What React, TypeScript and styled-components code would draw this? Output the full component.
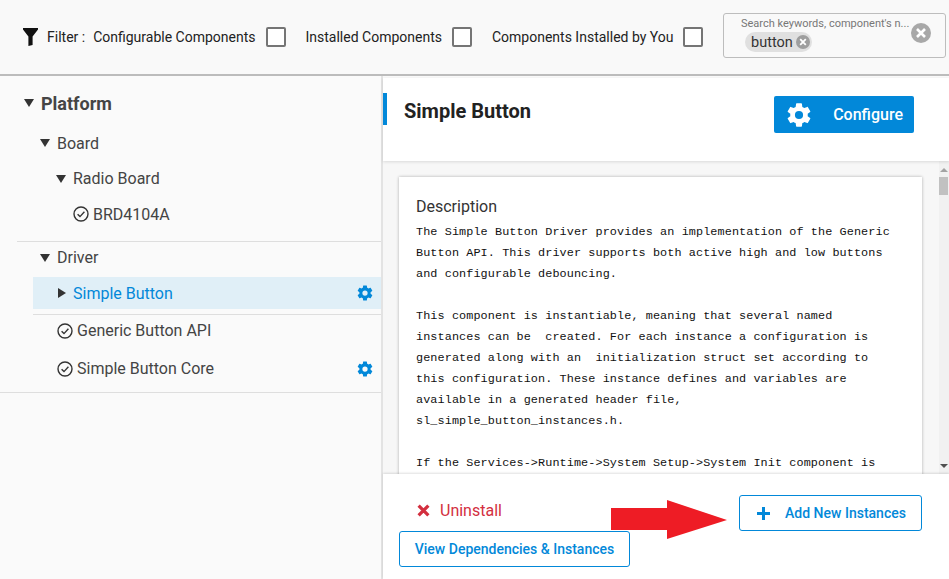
import React from "react";
import styled, { createGlobalStyle } from "styled-components";

const GlobalStyle = createGlobalStyle`
  html, body {
    margin: 0;
    padding: 0;
    background: #fafafa;
  }
  * { box-sizing: border-box; }
`;

const Page = styled.div`
  position: relative;
  width: 949px;
  height: 579px;
  overflow: hidden;
  display: flex;
  flex-direction: column;
  background: #fafafa;
  font-family: Roboto, "Liberation Sans", sans-serif;
  color: #333;
`;

const Toolbar = styled.div`
  height: 76px;
  flex: none;
  display: flex;
  align-items: center;
  padding: 0 3px 0 23px;
  border-bottom: 2px solid #bcbcbc;
  background: #f9f9f9;
  font-size: 14px;
  color: #222;
  white-space: nowrap;
`;

const FilterLabel = styled.span`
  margin-left: 9px;
  margin-right: 8px;
`;

const FilterOption = styled.label<{ gap: number }>`
  display: flex;
  align-items: center;
  flex: none;
  margin-right: ${(p) => p.gap}px;
`;

const CheckBox = styled.span`
  width: 20px;
  height: 20px;
  margin-left: 10px;
  border: 2px solid #757575;
  border-radius: 2px;
  background: #fff;
`;

const SearchBox = styled.div`
  position: relative;
  margin-left: auto;
  flex: none;
  width: 223px;
  height: 45px;
  margin-top: -3px;
  padding: 3px 0 0 17px;
  background: #f9f9f9;
  border: 1px solid #bdbdbd;
  border-radius: 3px;
`;

const SearchHint = styled.div`
  font-size: 11px;
  line-height: 14px;
  color: #777;
`;

const Chip = styled.span`
  display: inline-flex;
  align-items: center;
  height: 20px;
  margin: 1px 0 0 4px;
  padding: 0 2px 0 6px;
  gap: 3px;
  border-radius: 10px;
  background: #e0e0e0;
  font-size: 14.5px;
  color: #333;
`;

const ClearButton = styled.span`
  position: absolute;
  right: 14px;
  top: 9px;
  display: flex;
`;

const Body = styled.div`
  flex: 1;
  min-height: 0;
  display: flex;
`;

const Sidebar = styled.aside`
  width: 383px;
  flex: none;
  border-right: 2px solid #e3e3e3;
  padding-top: 9px;
`;

const TreeGroup = styled.div<{ inset?: number; underline?: boolean }>`
  margin-left: ${(p) => p.inset || 0}px;
  border-bottom: ${(p) => (p.underline ? "1px solid #dedede" : "none")};
`;

const Row = styled.div<{ height: number; indent: number; selected?: boolean }>`
  display: flex;
  align-items: center;
  height: ${(p) => p.height}px;
  padding-left: ${(p) => p.indent}px;
  padding-right: 7px;
  font-size: 16px;
  color: ${(p) => (p.selected ? "#0288d9" : "#444")};
  background: ${(p) => (p.selected ? "#e0eff7" : "transparent")};
`;

const PlatformRow = styled(Row)`
  margin-bottom: 4px;
  font-size: 18px;
  font-weight: 700;
  color: #454545;
`;

const Caret = styled.span<{ closed?: boolean }>`
  width: 0;
  height: 0;
  flex: none;
  margin-right: 7px;
  ${(p) =>
    p.closed
      ? `border-top: 5px solid transparent; border-bottom: 5px solid transparent; border-left: 8px solid #333;`
      : `border-left: 5px solid transparent; border-right: 5px solid transparent; border-top: 8px solid #333;`}
`;

const RowIcon = styled.span`
  display: flex;
  flex: none;
  margin-right: 4px;
`;

const RowGear = styled.span`
  display: flex;
  margin-left: auto;
`;

const Spacer = styled.div<{ size: number; line?: boolean }>`
  height: ${(p) => p.size}px;
  border-bottom: ${(p) => (p.line ? "1px solid #dedede" : "none")};
`;

const Detail = styled.main`
  flex: 1;
  min-width: 0;
  display: flex;
  flex-direction: column;
  margin-top: 2px;
  background: #fff;
`;

const Header = styled.header`
  height: 83px;
  flex: none;
  display: flex;
  align-items: flex-start;
  padding: 15px 35px 0 0;
  box-shadow: 0 1px 3px rgba(0, 0, 0, 0.12);
  z-index: 1;
`;

const Title = styled.h1`
  margin: 0;
  padding: 2px 0 0 17px;
  height: 32px;
  line-height: 32px;
  border-left: 4px solid #0288d9;
  font-size: 20px;
  font-weight: 700;
  color: #222;
`;

const ConfigureButton = styled.button`
  margin-left: auto;
  margin-top: 3px;
  width: 140px;
  height: 37px;
  display: flex;
  align-items: center;
  padding: 0 11px 0 11px;
  justify-content: space-between;
  border: none;
  border-radius: 2px;
  background: #0288d9;
  color: #fff;
  font-family: inherit;
  font-size: 16px;
  font-weight: 500;
`;

const ScrollArea = styled.div`
  position: relative;
  flex: 1;
  min-height: 0;
  overflow: hidden;
  display: flex;
  padding: 16px 0 0 16px;
  background: #f7f7f7;
`;

const Card = styled.article`
  width: 523px;
  height: 400px;
  flex: none;
  padding: 20px 17px 0;
  background: #fff;
  box-shadow: 0 0 3px rgba(0, 0, 0, 0.3);
`;

const CardHeading = styled.h2`
  margin: 0 0 6px;
  font-size: 16px;
  font-weight: 400;
  line-height: 19px;
  color: #333;
`;

const Code = styled.pre`
  margin: 0;
  font-family: "Liberation Mono", "Courier New", monospace;
  font-size: 11.8px;
  letter-spacing: 0.1px;
  line-height: 21px;
  color: #111;
`;

const ScrollBar = styled.div`
  position: absolute;
  top: 0;
  bottom: 0;
  right: 0;
  width: 10px;
  padding-top: 16px;
  background: #f1f1f1;
`;

const ScrollThumb = styled.div`
  height: 18px;
  margin-right: 1px;
  background: #c1c1c1;
`;

const ScrollArrow = styled.span<{ down?: boolean }>`
  position: absolute;
  left: 1px;
  ${(p) => (p.down ? "bottom: 6px;" : "top: 7px;")}
  border-left: 4px solid transparent;
  border-right: 4px solid transparent;
  ${(p) =>
    p.down ? "border-top: 4px solid #505050;" : "border-bottom: 4px solid #a3a3a3;"}
`;

const Footer = styled.footer`
  height: 105px;
  flex: none;
  padding: 21px 27px 0 16px;
  display: grid;
  grid-template-columns: 1fr auto;
  grid-template-rows: 36px 36px;
  box-shadow: 0 -1px 2px rgba(0, 0, 0, 0.12);
  z-index: 1;
  background: #fff;
`;

const Uninstall = styled.div`
  display: flex;
  align-items: center;
  gap: 10px;
  padding: 0 0 6px 18px;
  color: #d32f3f;
  font-size: 16px;
`;

const OutlineButton = styled.button`
  height: 36px;
  display: flex;
  align-items: center;
  justify-content: center;
  gap: 15px;
  border: 1px solid #0288d9;
  border-radius: 3px;
  background: #fff;
  color: #0288d9;
  font-family: inherit;
  font-size: 14px;
  font-weight: 500;
`;

const AddButton = styled(OutlineButton)`
  width: 183px;
  margin-left: 1px;
  padding-left: 8px;
`;

const DepsButton = styled(OutlineButton)`
  width: 231px;
  grid-column: 1 / -1;
`;

// red annotation arrow drawn on top of the screenshot
const Annotation = styled.svg`
  position: absolute;
  left: 610px;
  top: 499px;
  z-index: 2;
`;

const Gear = ({ size, color }: { size: number; color: string }) => (
  <svg width={size} height={size} viewBox="0 0 24 24" fill={color}>
    <path d="M19.43 12.98c.04-.32.07-.64.07-.98s-.03-.66-.07-.98l2.11-1.65c.19-.15.24-.42.12-.64l-2-3.46c-.12-.22-.39-.3-.61-.22l-2.49 1c-.52-.4-1.08-.73-1.69-.98l-.38-2.65A.49.49 0 0 0 14 2h-4c-.25 0-.46.18-.49.42l-.38 2.65c-.61.25-1.17.59-1.69.98l-2.49-1a.5.5 0 0 0-.61.22l-2 3.46c-.13.22-.07.49.12.64l2.11 1.65c-.04.32-.07.65-.07.98s.03.66.07.98l-2.11 1.65c-.19.15-.24.42-.12.64l2 3.46c.12.22.39.3.61.22l2.49-1c.52.4 1.08.73 1.69.98l.38 2.65c.03.24.24.42.49.42h4c.25 0 .46-.18.49-.42l.38-2.65c.61-.25 1.17-.59 1.69-.98l2.49 1c.23.09.49 0 .61-.22l2-3.46c.12-.22.07-.49-.12-.64l-2.11-1.65zM12 15.5a3.5 3.5 0 1 1 0-7 3.5 3.5 0 0 1 0 7z" />
  </svg>
);

const Check = () => (
  <svg width="16" height="16" viewBox="0 0 16 16" fill="none" stroke="#333" strokeWidth="1.4">
    <circle cx="8" cy="8" r="7" />
    <path d="M4.6 8.2l2.4 2.4 4.4-4.8" />
  </svg>
);

const Cross = ({ size, bg }: { size: number; bg: string }) => (
  <svg width={size} height={size} viewBox="0 0 20 20">
    <circle cx="10" cy="10" r="10" fill={bg} />
    <path d="M6 6l8 8M14 6l-8 8" stroke="#fff" strokeWidth="2.6" />
  </svg>
);

const description = `The Simple Button Driver provides an implementation of the Generic
Button API. This driver supports both active high and low buttons
and configurable debouncing.

This component is instantiable, meaning that several named
instances can be  created. For each instance a configuration is
generated along with an  initialization struct set according to
this configuration. These instance defines and variables are
available in a generated header file,
sl_simple_button_instances.h.

If the Services->Runtime->System Setup->System Init component is`;

export default function App() {
  return (
    <Page>
      <GlobalStyle />
      <Toolbar>
        <svg width="15" height="18" viewBox="0 0 15 18" fill="#111">
          <path d="M0 0h15v1.6L9.6 8.4V17l-4.2 1V8.4L0 1.6z" />
        </svg>
        <FilterLabel>Filter :</FilterLabel>
        <FilterOption gap={20}>
          Configurable Components
          <CheckBox />
        </FilterOption>
        <FilterOption gap={20}>
          Installed Components
          <CheckBox />
        </FilterOption>
        <FilterOption gap={0}>
          Components Installed by You
          <CheckBox />
        </FilterOption>
        <SearchBox>
          <SearchHint>Search keywords, component's n...</SearchHint>
          <Chip>
            button
            <Cross size={14} bg="#9e9e9e" />
          </Chip>
          <ClearButton>
            <Cross size={20} bg="#a8a8a8" />
          </ClearButton>
        </SearchBox>
      </Toolbar>
      <Body>
        <Sidebar>
          <PlatformRow height={36} indent={24}>
            <Caret />
            Platform
          </PlatformRow>
          <TreeGroup inset={17} underline>
            <Row height={36} indent={23}>
              <Caret />
              Board
            </Row>
            <Row height={35} indent={39}>
              <Caret />
              Radio Board
            </Row>
            <Row height={36} indent={56}>
              <RowIcon>
                <Check />
              </RowIcon>
              BRD4104A
            </Row>
            <Spacer size={9} />
          </TreeGroup>
          <TreeGroup inset={17}>
            <Row height={31} indent={23}>
              <Caret />
              Driver
            </Row>
            <Spacer size={4} />
          </TreeGroup>
          <TreeGroup inset={33}>
            <Row height={32} indent={25} selected>
              <Caret closed />
              Simple Button
              <RowGear>
                <Gear size={18} color="#0288d9" />
              </RowGear>
            </Row>
            <Spacer size={6} line />
          </TreeGroup>
          <Row height={31} indent={57}>
            <RowIcon>
              <Check />
            </RowIcon>
            Generic Button API
          </Row>
          <Row height={45} indent={57}>
            <RowIcon>
              <Check />
            </RowIcon>
            Simple Button Core
            <RowGear>
              <Gear size={18} color="#0288d9" />
            </RowGear>
          </Row>
          <Spacer size={2} line />
        </Sidebar>
        <Detail>
          <Header>
            <Title>Simple Button</Title>
            <ConfigureButton>
              <Gear size={28} color="#fff" />
              Configure
            </ConfigureButton>
          </Header>
          <ScrollArea>
            <Card>
              <CardHeading>Description</CardHeading>
              <Code>{description}</Code>
            </Card>
            <ScrollBar>
              <ScrollArrow />
              <ScrollThumb />
              <ScrollArrow down />
            </ScrollBar>
          </ScrollArea>
          <Footer>
            <Uninstall>
              <svg width="13" height="13" viewBox="0 0 12 12">
                <path d="M1.5 1.5l9 9M10.5 1.5l-9 9" stroke="#d32f3f" strokeWidth="3" />
              </svg>
              Uninstall
            </Uninstall>
            <AddButton>
              <svg width="13" height="13" viewBox="0 0 13 13">
                <path d="M6.5 0v13M0 6.5h13" stroke="#0288d9" strokeWidth="3" />
              </svg>
              Add New Instances
            </AddButton>
            <DepsButton>View Dependencies &amp; Instances</DepsButton>
          </Footer>
        </Detail>
      </Body>
      <Annotation width="118" height="42" viewBox="0 0 118 42">
        <path d="M1 9h56V1l60 20-60 19v-9H1z" fill="#ee1c25" />
      </Annotation>
    </Page>
  );
}
